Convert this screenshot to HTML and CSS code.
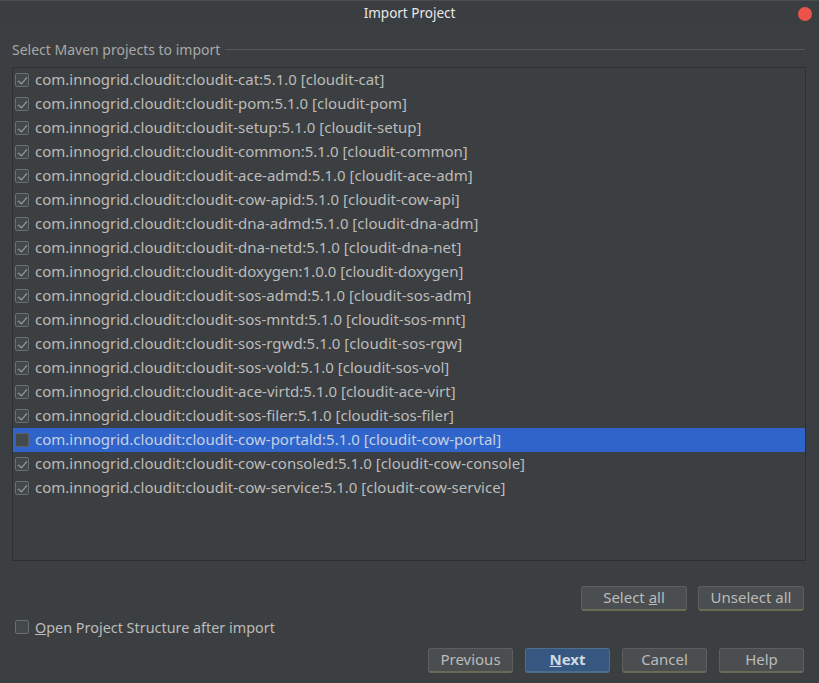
FILE: index.html
```html
<!DOCTYPE html>
<html>
<head>
<meta charset="utf-8">
<link rel="stylesheet" href="styles.css">
</head>
<body>
<div class="window">
  <div class="titlebar">
    <span></span>
    <span class="title">Import Project</span>
    <span class="close-wrap"><span class="close"></span></span>
  </div>
  <div class="content">
    <div class="group-header">
      <span class="group-label">Select Maven projects to import</span>
      <span class="group-line"></span>
    </div>
    <div class="list">
      <div class="row"><span class="cb checked"></span><span class="txt">com.innogrid.cloudit:cloudit-cat:5.1.0 [cloudit-cat]</span></div>
      <div class="row"><span class="cb checked"></span><span class="txt">com.innogrid.cloudit:cloudit-pom:5.1.0 [cloudit-pom]</span></div>
      <div class="row"><span class="cb checked"></span><span class="txt">com.innogrid.cloudit:cloudit-setup:5.1.0 [cloudit-setup]</span></div>
      <div class="row"><span class="cb checked"></span><span class="txt">com.innogrid.cloudit:cloudit-common:5.1.0 [cloudit-common]</span></div>
      <div class="row"><span class="cb checked"></span><span class="txt">com.innogrid.cloudit:cloudit-ace-admd:5.1.0 [cloudit-ace-adm]</span></div>
      <div class="row"><span class="cb checked"></span><span class="txt">com.innogrid.cloudit:cloudit-cow-apid:5.1.0 [cloudit-cow-api]</span></div>
      <div class="row"><span class="cb checked"></span><span class="txt">com.innogrid.cloudit:cloudit-dna-admd:5.1.0 [cloudit-dna-adm]</span></div>
      <div class="row"><span class="cb checked"></span><span class="txt">com.innogrid.cloudit:cloudit-dna-netd:5.1.0 [cloudit-dna-net]</span></div>
      <div class="row"><span class="cb checked"></span><span class="txt">com.innogrid.cloudit:cloudit-doxygen:1.0.0 [cloudit-doxygen]</span></div>
      <div class="row"><span class="cb checked"></span><span class="txt">com.innogrid.cloudit:cloudit-sos-admd:5.1.0 [cloudit-sos-adm]</span></div>
      <div class="row"><span class="cb checked"></span><span class="txt">com.innogrid.cloudit:cloudit-sos-mntd:5.1.0 [cloudit-sos-mnt]</span></div>
      <div class="row"><span class="cb checked"></span><span class="txt">com.innogrid.cloudit:cloudit-sos-rgwd:5.1.0 [cloudit-sos-rgw]</span></div>
      <div class="row"><span class="cb checked"></span><span class="txt">com.innogrid.cloudit:cloudit-sos-vold:5.1.0 [cloudit-sos-vol]</span></div>
      <div class="row"><span class="cb checked"></span><span class="txt">com.innogrid.cloudit:cloudit-ace-virtd:5.1.0 [cloudit-ace-virt]</span></div>
      <div class="row"><span class="cb checked"></span><span class="txt">com.innogrid.cloudit:cloudit-sos-filer:5.1.0 [cloudit-sos-filer]</span></div>
      <div class="row selected"><span class="cb"></span><span class="txt">com.innogrid.cloudit:cloudit-cow-portald:5.1.0 [cloudit-cow-portal]</span></div>
      <div class="row"><span class="cb checked"></span><span class="txt">com.innogrid.cloudit:cloudit-cow-consoled:5.1.0 [cloudit-cow-console]</span></div>
      <div class="row"><span class="cb checked"></span><span class="txt">com.innogrid.cloudit:cloudit-cow-service:5.1.0 [cloudit-cow-service]</span></div>
    </div>
    <div class="select-row">
      <button class="btn">Select <u>a</u>ll</button>
      <button class="btn">Unselect all</button>
    </div>
    <div class="option-row">
      <span class="cb"></span><span class="txt opt">Open Project Structure after import</span>
    </div>
    <div class="nav-row">
      <button class="btn">Previous</button>
      <button class="btn primary"><u>N</u>ext</button>
      <button class="btn">Cancel</button>
      <button class="btn">Help</button>
    </div>
  </div>
</div>
</body>
</html>
```
FILE: styles.css
```css
* { box-sizing: border-box; }
html, body { margin: 0; padding: 0; }
body {
  width: 819px;
  height: 683px;
  background: #3c3f41;
  font-family: "Noto Sans", "Open Sans", sans-serif;
  color: #bbbbbb;
  overflow: hidden;
}
.window {
  display: flex;
  flex-direction: column;
  height: 683px;
  background: #3c3f41;
}
.titlebar {
  height: 26px;
  display: grid;
  grid-template-columns: 1fr auto 1fr;
  align-items: center;
  background: #3b3e40;
  border-top: 1px solid #4a4d4f;
}
.title {
  font-size: 13.5px;
  color: #e8e8e8;
  margin-top: -2px;
}
.close-wrap {
  display: flex;
  justify-content: flex-end;
  padding-right: 7px;
}
.close {
  width: 14px;
  height: 14px;
  border-radius: 50%;
  background: #e9534a;
}
.content {
  padding: 0 12px 0 12px;
  display: flex;
  flex-direction: column;
}
.group-header {
  display: flex;
  align-items: center;
  height: 41px;
  padding-top: 5px;
}
.group-label {
  font-size: 14px;
  color: #a8a8a8;
  white-space: nowrap;
}
.group-line {
  flex: 1;
  height: 1px;
  background: #55585a;
  margin-left: 5px;
  margin-right: 2px;
}
.list {
  border: 1px solid #2e2f30;
  height: 494px;
  margin-right: 1px;
}
.row {
  height: 24px;
  display: flex;
  align-items: center;
  padding-left: 2px;
}
.row.selected {
  background: #2f65ca;
}
.cb {
  width: 14px;
  height: 14px;
  border: 1px solid #6b6e70;
  border-radius: 2px;
  background: #43494a;
  flex: none;
  position: relative;
}
.row.selected .cb {
  border-color: #5d6063;
  background: #45494b;
}
.cb.checked::after {
  content: "";
  position: absolute;
  left: 4px;
  top: 1px;
  width: 4px;
  height: 8px;
  border-right: 1.5px solid #a9a9a9;
  border-bottom: 1.5px solid #a9a9a9;
  transform: rotate(40deg);
}
.txt {
  margin-left: 6px;
  font-size: 15px;
  white-space: nowrap;
  color: #bbbbbb;
  margin-top: -2px;
}
.txt.opt {
  margin-top: 0;
  font-size: 14.4px;
}
.txt.opt::first-letter {
  text-decoration: underline;
}
.row.selected .txt { color: #c6d0e4; }
.select-row {
  display: flex;
  justify-content: flex-end;
  gap: 11px;
  margin-top: 25px;
  margin-right: 3px;
}
.btn {
  width: 106px;
  height: 25px;
  background: #4a4e50;
  border: 1px solid #5c5f60;
  border-bottom: 2px solid #6a6b55;
  border-radius: 3px;
  color: #bbbbbb;
  font-family: "Noto Sans", "Open Sans", sans-serif;
  font-size: 15px;
  padding: 0 0 2px 0;
  line-height: 20px;
}
.option-row {
  display: flex;
  align-items: center;
  margin-top: 8px;
  height: 16px;
  padding-left: 3px;
}
.nav-row {
  display: flex;
  justify-content: flex-end;
  gap: 12px;
  margin-top: 13px;
  margin-right: 3px;
}
.nav-row .btn { width: 85px; }
.btn.primary {
  background: #365880;
  border-color: #4c708c;
  border-bottom-color: #4c708c;
  color: #d0d8e4;
  font-weight: bold;
}
```
